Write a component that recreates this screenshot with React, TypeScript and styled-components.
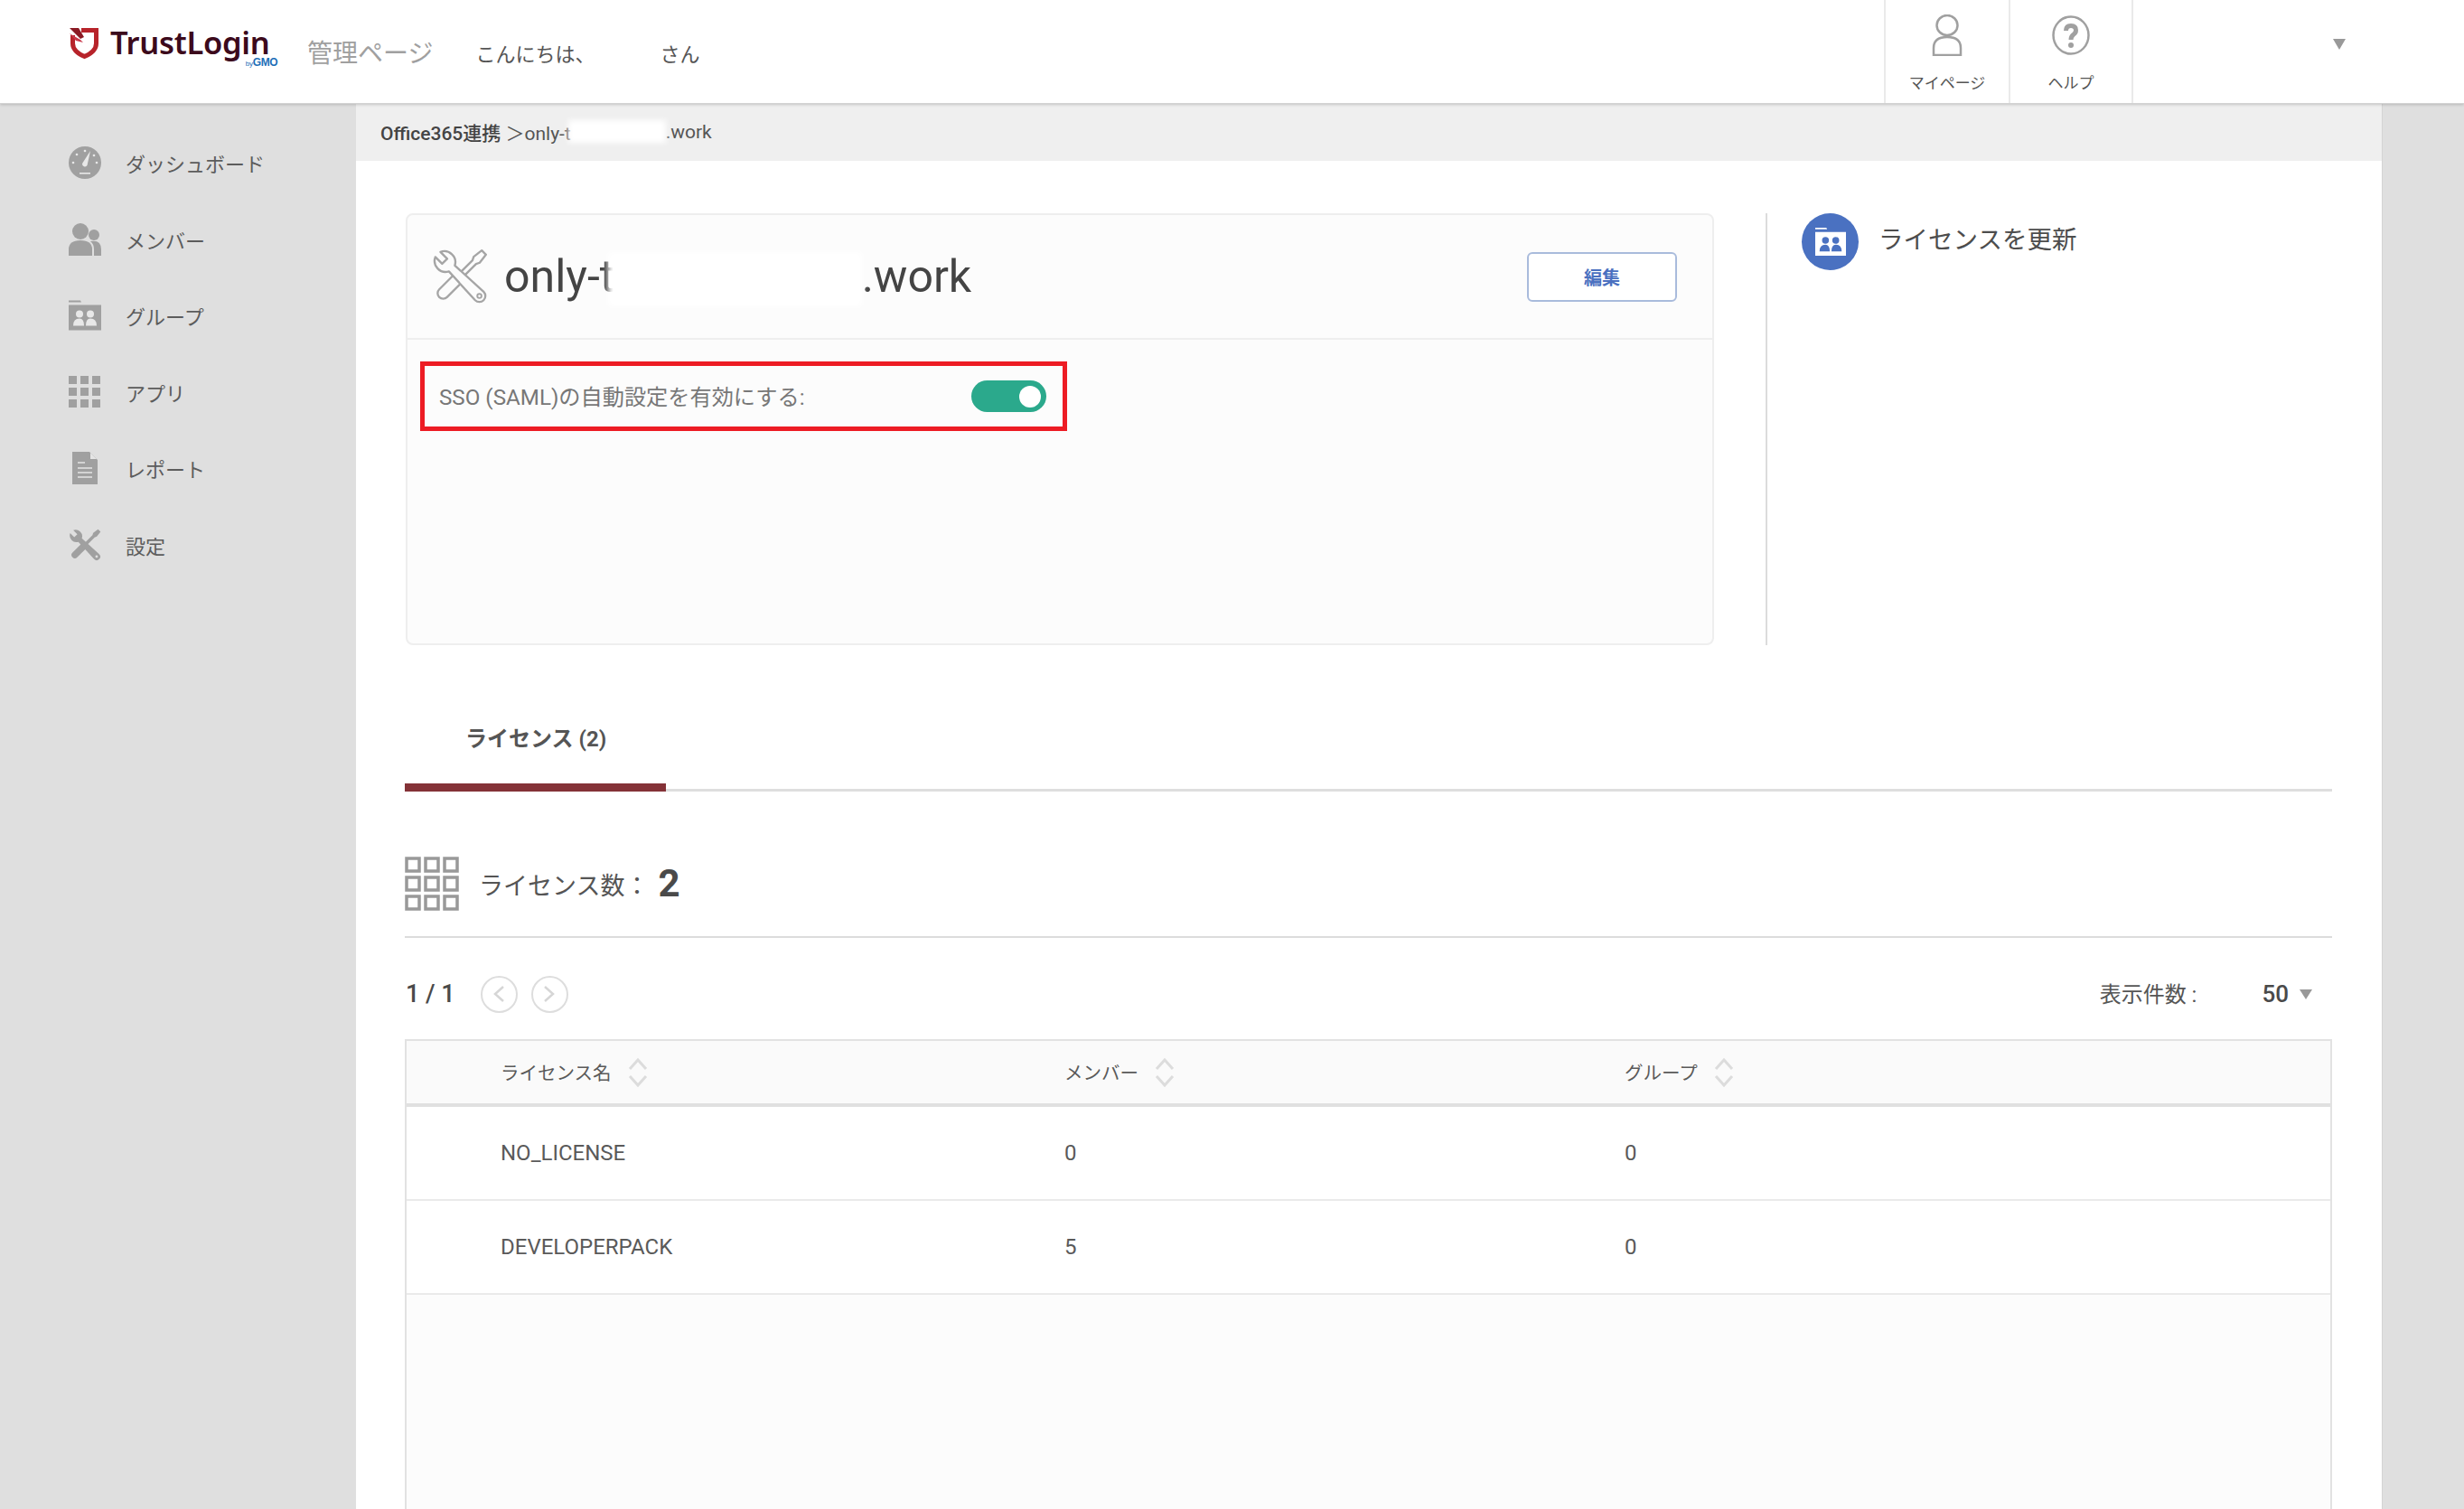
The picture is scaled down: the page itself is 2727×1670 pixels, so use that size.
import styled, { createGlobalStyle } from 'styled-components';

const GlobalStyle = createGlobalStyle`
  * { box-sizing: border-box; }
  html, body { margin: 0; padding: 0; height: 100%; overflow: hidden; }
  body {
    background: #dfdfdf;
    color: #4a4a4a;
    font-family: Roboto, "Noto Sans CJK JP", sans-serif;
  }
`;

const Page = styled.div`
  display: flex;
  flex-direction: column;
  height: 1670px;
  overflow: hidden;
`;

const Header = styled.header`
  position: relative;
  z-index: 2;
  display: flex;
  align-items: stretch;
  flex: 0 0 115px;
  height: 115px;
  background: #fff;
  border-bottom: 1px solid #d2d2d2;
  box-shadow: 0 1px 3px rgba(0, 0, 0, 0.18);
  padding-left: 77px;
`;

const Logo = styled.div`
  display: flex;
  align-items: flex-start;
  width: 233px;
  padding-top: 30px;
`;

const LogoWords = styled.div`
  display: flex;
  flex-direction: column;
  align-items: flex-end;
  margin-left: 12px;
`;

const LogoName = styled.span`
  font-family: "Noto Sans", sans-serif;
  font-weight: 600;
  font-size: 34.5px;
  line-height: 34px;
  letter-spacing: -0.3px;
  color: #3c0a1c;
`;

const LogoBy = styled.span`
  margin-right: -9px;
  font-family: "Liberation Sans", sans-serif;
  font-size: 12px;
  font-weight: 700;
  line-height: 10px;
  letter-spacing: -0.3px;
  color: #1d6fb8;
  small { font-size: 8px; font-weight: 400; }
`;

const AdminLabel = styled.span`
  margin: 44px 0 0 30px;
  font-size: 28px;
  line-height: 32px;
  font-weight: 400;
  color: #a0a0a0;
`;

const Greeting = styled.span`
  display: inline-flex;
  margin: 48px 0 0 47px;
  font-size: 22px;
  line-height: 26px;
  font-weight: 400;
  color: #555;
`;

const GreetingName = styled.span`
  display: inline-block;
  width: 72px;
`;

const HeaderNav = styled.nav`
  display: flex;
  margin-left: auto;
`;

const NavItem = styled.a<{ $width: number }>`
  display: flex;
  flex-direction: column;
  align-items: center;
  width: ${(p) => p.$width}px;
  border-left: 2px solid #eaeaea;
  font-size: 17px;
  color: #555;
  svg { margin-top: 16px; height: 46px; }
  span { margin-top: 18px; line-height: 24px; }
`;

const Account = styled.div`
  display: flex;
  width: 368px;
  border-left: 2px solid #eaeaea;
  padding: 43px 0 0 221px;
`;

const Triangle = styled.i<{ $w: number; $h: number }>`
  display: block;
  width: 0;
  height: 0;
  border-left: ${(p) => p.$w / 2}px solid transparent;
  border-right: ${(p) => p.$w / 2}px solid transparent;
  border-top: ${(p) => p.$h}px solid #999;
`;

const Body = styled.div`
  display: flex;
  flex: 1;
  min-height: 0;
`;

const Sidebar = styled.aside`
  flex: 0 0 394px;
  padding-top: 23px;
  background: #dfdfdf;
`;

const SideItem = styled.a`
  display: flex;
  align-items: center;
  height: 84.5px;
  padding-left: 76px;
  font-size: 22px;
  font-weight: 400;
  color: #5c5c5c;
`;

const SideIcon = styled.span`
  display: flex;
  flex: 0 0 63px;
  svg { width: 36px; height: 36px; display: block; }
`;

const Main = styled.main`
  display: flex;
  flex-direction: column;
  flex: 0 0 2243px;
  width: 2243px;
  background: #fff;
  border-right: 1px solid #d4d4d4;
`;

const Breadcrumb = styled.div`
  display: flex;
  align-items: center;
  flex: 0 0 63px;
  padding: 0 0 2px 27px;
  background: #efefef;
  font-size: 21px;
  color: #555;
  white-space: pre;
  b { font-weight: 500; color: #444; }
`;

const BlurBlock = styled.span<{ $w: number }>`
  display: inline-block;
  width: ${(p) => p.$w}px;
  height: 1.2em;
  margin-left: -0.15em;
  vertical-align: middle;
  background: #fff;
  filter: blur(3px);
`;

const Content = styled.div`
  display: flex;
  flex-direction: column;
  flex: 1;
  min-height: 0;
  padding: 58px 55px 0 54px;
`;

const TopRow = styled.section`
  display: flex;
  flex: 0 0 478px;
`;

const Card = styled.div`
  flex: 0 0 1448px;
  margin-left: 1px;
  background: #fcfcfc;
  border: 2px solid #eeeeee;
  border-radius: 8px;
`;

const CardHead = styled.div`
  display: flex;
  align-items: center;
  height: 138px;
  padding: 0 39px 0 28px;
  border-bottom: 2px solid #eeeeee;
  svg { width: 60px; height: 64px; flex: none; }
`;

const CardTitle = styled.h1`
  margin: 3px 0 0 19px;
  font-size: 50px;
  font-weight: 400;
  color: #444;
  line-height: 60px;
`;

const EditButton = styled.button`
  margin-left: auto;
  width: 166px;
  height: 55px;
  background: #fff;
  border: 2px solid #a9bbdc;
  border-radius: 6px;
  font-family: inherit;
  font-size: 20px;
  font-weight: 700;
  color: #4a70c0;
`;

const SsoRow = styled.div`
  display: flex;
  align-items: center;
  justify-content: space-between;
  width: 716px;
  height: 77px;
  margin: 24px 0 0 14px;
  padding: 0 18px 0 16px;
  border: 5px solid #ed1c24;
  font-size: 24.2px;
  font-weight: 400;
  color: #777;
`;

const SsoLabel = styled.span`
  margin-bottom: 3px;
`;

const Toggle = styled.span`
  display: flex;
  align-items: center;
  justify-content: flex-end;
  width: 83px;
  height: 35px;
  padding-right: 6px;
  border-radius: 18px;
  background: #2ba98c;
  &::after {
    content: '';
    width: 24px;
    height: 24px;
    border-radius: 50%;
    background: #fff;
  }
`;

const SidePanel = styled.div`
  display: flex;
  align-items: flex-start;
  flex: 1;
  margin-left: 57px;
  padding-left: 38px;
  border-left: 2px solid #dcdcdc;
`;

const RenewIcon = styled.span`
  display: flex;
  align-items: center;
  justify-content: center;
  width: 63px;
  height: 63px;
  border-radius: 50%;
  background: #4a71c1;
  svg { width: 34px; height: 33px; }
`;

const RenewLabel = styled.span`
  margin: 12px 0 0 22px;
  font-size: 27.5px;
  line-height: 36px;
  font-weight: 400;
  color: #4d4d4d;
`;

const Tabs = styled.div`
  display: flex;
  align-items: flex-end;
  flex: 0 0 162px;
  border-bottom: 3px solid #dedede;
`;

const Tab = styled.div`
  width: 289px;
  height: 87px;
  margin-bottom: -3px;
  padding: 11px 0 0 67px;
  border-bottom: 9px solid #843237;
  font-size: 24px;
  font-weight: 700;
  line-height: 36px;
  color: #555;
`;

const CountRow = styled.div`
  display: flex;
  align-items: center;
  flex: 0 0 162px;
  padding-top: 44px;
  border-bottom: 2px solid #dcdcdc;
  svg { width: 60px; height: 60px; flex: none; }
`;

const CountLabel = styled.span`
  margin: 1px 0 0 22px;
  font-size: 27px;
  font-weight: 400;
  color: #555;
`;

const CountValue = styled.strong`
  margin-left: 10px;
  font-size: 42px;
  font-weight: 700;
  line-height: 42px;
  color: #4a4a4a;
`;

const PagerRow = styled.div`
  display: flex;
  align-items: center;
  flex: 0 0 112px;
  padding: 12px 22px 0 0;
`;

const PageNo = styled.span`
  margin: 0 28px 0 1px;
  font-size: 27px;
  font-weight: 500;
  color: #4a4a4a;
`;

const PageButton = styled.span`
  display: flex;
  align-items: center;
  justify-content: center;
  width: 41px;
  height: 41px;
  margin-right: 15px;
  border: 2px solid #dddddd;
  border-radius: 50%;
  color: #d6d6d6;
`;

const PerPage = styled.span`
  margin: 0 0 4px auto;
  font-size: 24px;
  font-weight: 400;
  color: #555;
`;

const PerValue = styled.b`
  margin: 0 12px 0 72px;
  font-size: 26px;
  font-weight: 500;
  color: #4a4a4a;
`;

const Table = styled.div`
  flex: 1;
  background: #fcfcfc;
  border: 2px solid #e2e2e2;
  border-bottom: 0;
`;

const Row = styled.div<{ $head?: boolean }>`
  display: grid;
  grid-template-columns: 624px 620px 1fr;
  align-items: center;
  height: ${(p) => (p.$head ? '73px' : '104px')};
  padding-left: 104px;
  background: ${(p) => (p.$head ? '#fafafa' : '#fff')};
  border-bottom: ${(p) => (p.$head ? '4px solid #e0e0e0' : '2px solid #eaeaea')};
  font-size: ${(p) => (p.$head ? '20.5px' : '24px')};
  font-weight: 400;
  color: #5a5a5a;
`;

const HeadCell = styled.span`
  display: flex;
  align-items: center;
  gap: 18px;
  padding-bottom: 2px;
  svg { width: 22px; height: 34px; margin-top: 2px; }
`;

const Wrench = ({ fill, stroke }: { fill: string; stroke: string }) => (
  <svg viewBox="0 0 64 64">
    <g transform="rotate(45 32 32)" fill={fill} stroke={stroke} strokeWidth="2.5" strokeLinejoin="round">
      <path d="M28.5 -8 L35.5 -8 L37 4 L35 8 L35 30 L38.5 34 L38.5 60 A6.5 6.5 0 0 1 25.5 60 L25.5 34 L29 30 L29 8 L27 4 Z" />
    </g>
    <path
      d="M9 3 L17 11 L11 17 L3 9 A13 13 0 0 0 19 26 L50 60 A7 7 0 0 0 60 50 L26 19 A13 13 0 0 0 9 3 Z"
      fill={fill}
      stroke={stroke}
      strokeWidth="2.5"
      strokeLinejoin="round"
    />
    <circle cx="55" cy="55" r="2.5" fill={stroke === 'none' ? '#dfdfdf' : 'none'} stroke={stroke} strokeWidth="2" />
  </svg>
);

const GaugeIcon = () => (
  <svg viewBox="0 0 36 36">
    <circle cx="18" cy="18" r="18" fill="#a0a0a0" />
    <path d="M24 5 L20.5 21 A3 3 0 0 1 15 19 Z" fill="#e8e8e8" />
    <rect x="12" y="29" width="12" height="1.6" fill="#e8e8e8" />
    <g fill="#e8e8e8">
      <circle cx="5" cy="18" r="1.3" />
      <circle cx="31" cy="18" r="1.3" />
      <circle cx="9" cy="9" r="1.3" />
      <circle cx="18" cy="5" r="1.3" />
      <circle cx="28" cy="10" r="1.3" />
    </g>
  </svg>
);

const MembersIcon = () => (
  <svg viewBox="0 0 36 36" fill="#a0a0a0">
    <circle cx="13" cy="9" r="9" />
    <circle cx="28" cy="13" r="6" />
    <path d="M0 36 V29 Q0 19 13 19 Q26 19 26 29 V36 Z" />
    <path d="M28 36 V29 Q28 23 24 20 Q36 18 36 29 V36 Z" />
  </svg>
);

const GroupIcon = ({ fill, inner }: { fill: string; inner: string }) => (
  <svg viewBox="0 0 36 33">
    <path d="M0 0 H13 L14 2 H0 Z M0 5 H36 V33 H0 Z" fill={fill} />
    <g fill={inner}>
      <circle cx="12" cy="15" r="4" />
      <circle cx="24" cy="15" r="4" />
      <path d="M5 28 Q5 20 12 20 Q17 20 17 28 Z" />
      <path d="M19 28 Q19 20 24 20 Q31 20 31 28 Z" />
    </g>
  </svg>
);

const AppsIcon = () => (
  <svg viewBox="0 0 36 36" fill="#a0a0a0">
    {[0, 13, 26].map((y) =>
      [0, 13, 26].map((x) => <rect key={`${x}-${y}`} x={x} y={y} width="9" height="9" />),
    )}
  </svg>
);

const ReportIcon = () => (
  <svg viewBox="0 0 36 36">
    <path d="M4 0 H23 L32 9 V36 H4 Z" fill="#a0a0a0" />
    <path d="M24 1 L31 8 H24 Z" fill="#e4e4e4" />
    <path d="M10 12 H18 M10 18 H26 M10 23 H26 M10 28 H26" stroke="#e4e4e4" strokeWidth="1.4" />
  </svg>
);

const SortIcon = () => (
  <svg viewBox="0 0 22 34" fill="none" stroke="#dcdcdc" strokeWidth="3">
    <path d="M2 13 L11 3 L20 13 M2 21 L11 31 L20 21" />
  </svg>
);

const menu = [
  { label: 'ダッシュボード', icon: <GaugeIcon /> },
  { label: 'メンバー', icon: <MembersIcon /> },
  { label: 'グループ', icon: <GroupIcon fill="#a0a0a0" inner="#e8e8e8" /> },
  { label: 'アプリ', icon: <AppsIcon /> },
  { label: 'レポート', icon: <ReportIcon /> },
  { label: '設定', icon: <Wrench fill="#a0a0a0" stroke="none" /> },
];

const licenses = [
  { name: 'NO_LICENSE', members: 0, groups: 0 },
  { name: 'DEVELOPERPACK', members: 5, groups: 0 },
];

export default function App() {
  return (
    <Page>
      <GlobalStyle />
      <Header>
        <Logo>
          <svg width="33" height="36" viewBox="0 0 33 36">
            <path d="M13 3.5 H29.5 V18 Q29.5 27 16.5 32.5 Q3.5 27 3.5 18 V9" fill="#fff" stroke="#b7232a" strokeWidth="5" />
            <path d="M0 1 L10 1 L16 11 L12 13 Z" fill="#8a1a24" />
            <path d="M0 7 L12 14 L15 17 L7 15 Z" fill="#c9384a" />
          </svg>
          <LogoWords>
            <LogoName>TrustLogin</LogoName>
            <LogoBy>
              <small>by</small>GMO
            </LogoBy>
          </LogoWords>
        </Logo>
        <AdminLabel>管理ページ</AdminLabel>
        <Greeting>
          こんにちは、<GreetingName />さん
        </Greeting>
        <HeaderNav>
          <NavItem $width={138}>
            <svg width="34" viewBox="0 0 34 46" fill="none" stroke="#a0a0a0" strokeWidth="2.5">
              <ellipse cx="17" cy="12" rx="11.5" ry="11" />
              <path d="M2 45 V37 Q2 25 17 25 Q32 25 32 37 V45 Z" />
            </svg>
            <span>マイページ</span>
          </NavItem>
          <NavItem $width={136}>
            <svg width="42" viewBox="0 0 42 46" fill="none">
              <ellipse cx="21" cy="23" rx="19.5" ry="20.5" stroke="#a0a0a0" strokeWidth="2.5" />
              <path d="M15.5 18 Q15.5 12.5 21 12.5 Q26.5 12.5 26.5 17.5 Q26.5 20.5 23.5 22.5 Q21 24.5 21 28" stroke="#a0a0a0" strokeWidth="5" />
              <circle cx="21" cy="34" r="3" fill="#a0a0a0" />
            </svg>
            <span>ヘルプ</span>
          </NavItem>
          <Account>
            <Triangle $w={15} $h={12} />
          </Account>
        </HeaderNav>
      </Header>
      <Body>
        <Sidebar>
          {menu.map((item) => (
            <SideItem key={item.label}>
              <SideIcon>{item.icon}</SideIcon>
              {item.label}
            </SideItem>
          ))}
        </Sidebar>
        <Main>
          <Breadcrumb>
            <b>Office365連携</b> ＞only-t<BlurBlock $w={108} />.work
          </Breadcrumb>
          <Content>
            <TopRow>
              <Card>
                <CardHead>
                  <Wrench fill="#fcfcfc" stroke="#a5a5a5" />
                  <CardTitle>
                    only-t<BlurBlock $w={281} />.work
                  </CardTitle>
                  <EditButton>編集</EditButton>
                </CardHead>
                <SsoRow>
                  <SsoLabel>SSO (SAML)の自動設定を有効にする:</SsoLabel>
                  <Toggle />
                </SsoRow>
              </Card>
              <SidePanel>
                <RenewIcon>
                  <GroupIcon fill="#fff" inner="#4a71c1" />
                </RenewIcon>
                <RenewLabel>ライセンスを更新</RenewLabel>
              </SidePanel>
            </TopRow>
            <Tabs>
              <Tab>ライセンス (2)</Tab>
            </Tabs>
            <CountRow>
              <svg viewBox="0 0 60 60" fill="none" stroke="#999" strokeWidth="3.5">
                {[2, 23, 44].map((y) =>
                  [2, 23, 44].map((x) => <rect key={`${x}-${y}`} x={x} y={y} width="14" height="14" />),
                )}
              </svg>
              <CountLabel>ライセンス数：</CountLabel>
              <CountValue>2</CountValue>
            </CountRow>
            <PagerRow>
              <PageNo>1 / 1</PageNo>
              <PageButton>
                <svg width="16" height="20" viewBox="0 0 16 20" fill="none" stroke="currentColor" strokeWidth="2.5">
                  <path d="M13 2 L4 10 L13 18" />
                </svg>
              </PageButton>
              <PageButton>
                <svg width="16" height="20" viewBox="0 0 16 20" fill="none" stroke="currentColor" strokeWidth="2.5">
                  <path d="M3 2 L12 10 L3 18" />
                </svg>
              </PageButton>
              <PerPage>表示件数 :</PerPage>
              <PerValue>50</PerValue>
              <Triangle $w={15} $h={11} />
            </PagerRow>
            <Table>
              <Row $head>
                <HeadCell>
                  ライセンス名
                  <SortIcon />
                </HeadCell>
                <HeadCell>
                  メンバー
                  <SortIcon />
                </HeadCell>
                <HeadCell>
                  グループ
                  <SortIcon />
                </HeadCell>
              </Row>
              {licenses.map((row) => (
                <Row key={row.name}>
                  <span>{row.name}</span>
                  <span>{row.members}</span>
                  <span>{row.groups}</span>
                </Row>
              ))}
            </Table>
          </Content>
        </Main>
      </Body>
    </Page>
  );
}
